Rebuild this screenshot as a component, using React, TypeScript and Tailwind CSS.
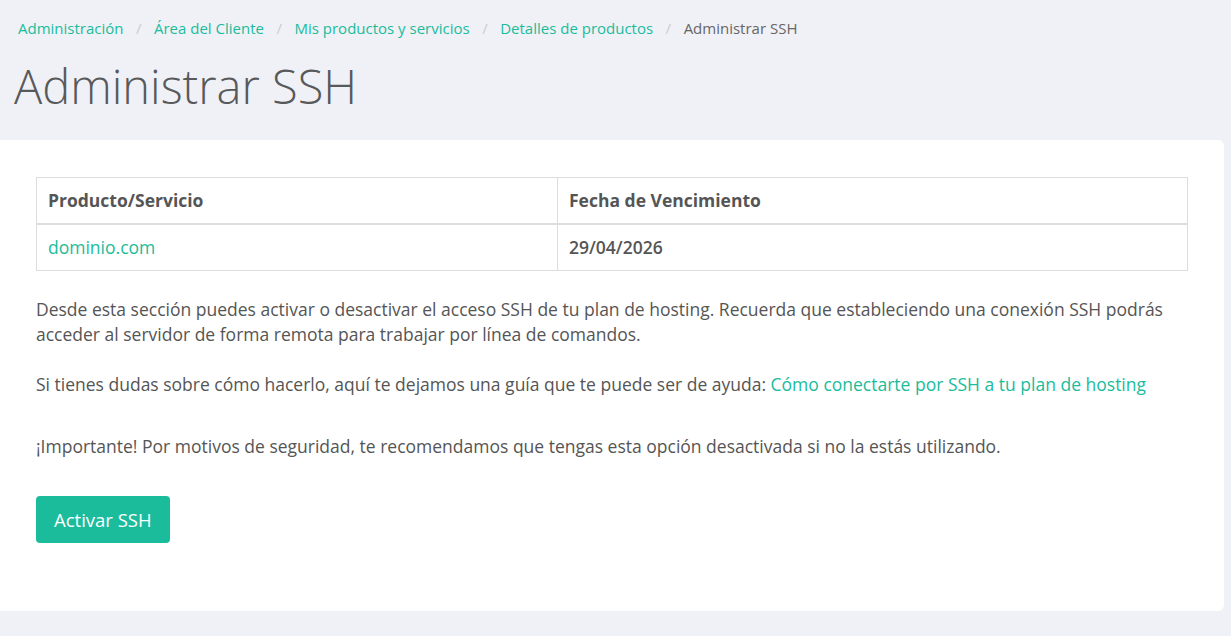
const crumbs = ['Administración', 'Área del Cliente', 'Mis productos y servicios', 'Detalles de productos'];

export default function App() {
  return (
    <div className="min-h-[636px] bg-[#f0f1f6] text-[#555] font-['Open_Sans',sans-serif]">
      <div className="px-[18px] pt-[17px]">
        <nav className="flex items-center text-[15px] leading-[22px]">
          {crumbs.map((c) => (
            <span key={c} className="flex items-center">
              <a className="text-[#1abc9c]">{c}</a>
              <span className="px-[12.5px] text-[#ccc]">/</span>
            </span>
          ))}
          <span className="text-[#666]">Administrar SSH</span>
        </nav>
        <h1 className="-ml-[4px] mt-[17px] text-[47px] leading-[60px] font-light text-[#58595b]">Administrar SSH</h1>
      </div>

      <div className="mt-[24px] mr-[7px] rounded-r-[6px] bg-white px-[36px] pt-[37px] pb-[68px] text-[17.5px]">
        <table className="w-full border-collapse">
          <thead>
            <tr>
              <th className="w-[521px] border border-[#ddd] border-b-2 px-[11px] py-[10px] text-left leading-[25px] font-bold text-[#555]">
                Producto/Servicio
              </th>
              <th className="border border-[#ddd] border-b-2 px-[11px] py-[10px] text-left leading-[25px] font-bold text-[#555]">
                Fecha de Vencimiento
              </th>
            </tr>
          </thead>
          <tbody>
            <tr>
              <td className="border border-[#ddd] px-[11px] py-[10px] leading-[25px] text-[#1abc9c]">dominio.com</td>
              <td className="border border-[#ddd] px-[11px] py-[10px] leading-[25px] font-semibold">29/04/2026</td>
            </tr>
          </tbody>
        </table>

        <p className="mt-[26px] leading-[25px]">
          Desde esta sección puedes activar o desactivar el acceso SSH de tu plan de hosting. Recuerda que estableciendo una conexión SSH podrás acceder al servidor de forma remota para trabajar por línea de comandos.
        </p>
        <p className="mt-[25px] leading-[25px]">
          Si tienes dudas sobre cómo hacerlo, aquí te dejamos una guía que te puede ser de ayuda:{' '}
          <a className="text-[#1abc9c]">Cómo conectarte por SSH a tu plan de hosting</a>
        </p>
        <p className="mt-[37px] leading-[25px]">
          ¡Importante! Por motivos de seguridad, te recomendamos que tengas esta opción desactivada si no la estás utilizando.
        </p>

        <button className="mt-[37px] h-[47px] rounded-[4px] bg-[#1abc9c] px-[18px] text-[18.5px] text-white">
          Activar SSH
        </button>
      </div>
    </div>
  );
}
